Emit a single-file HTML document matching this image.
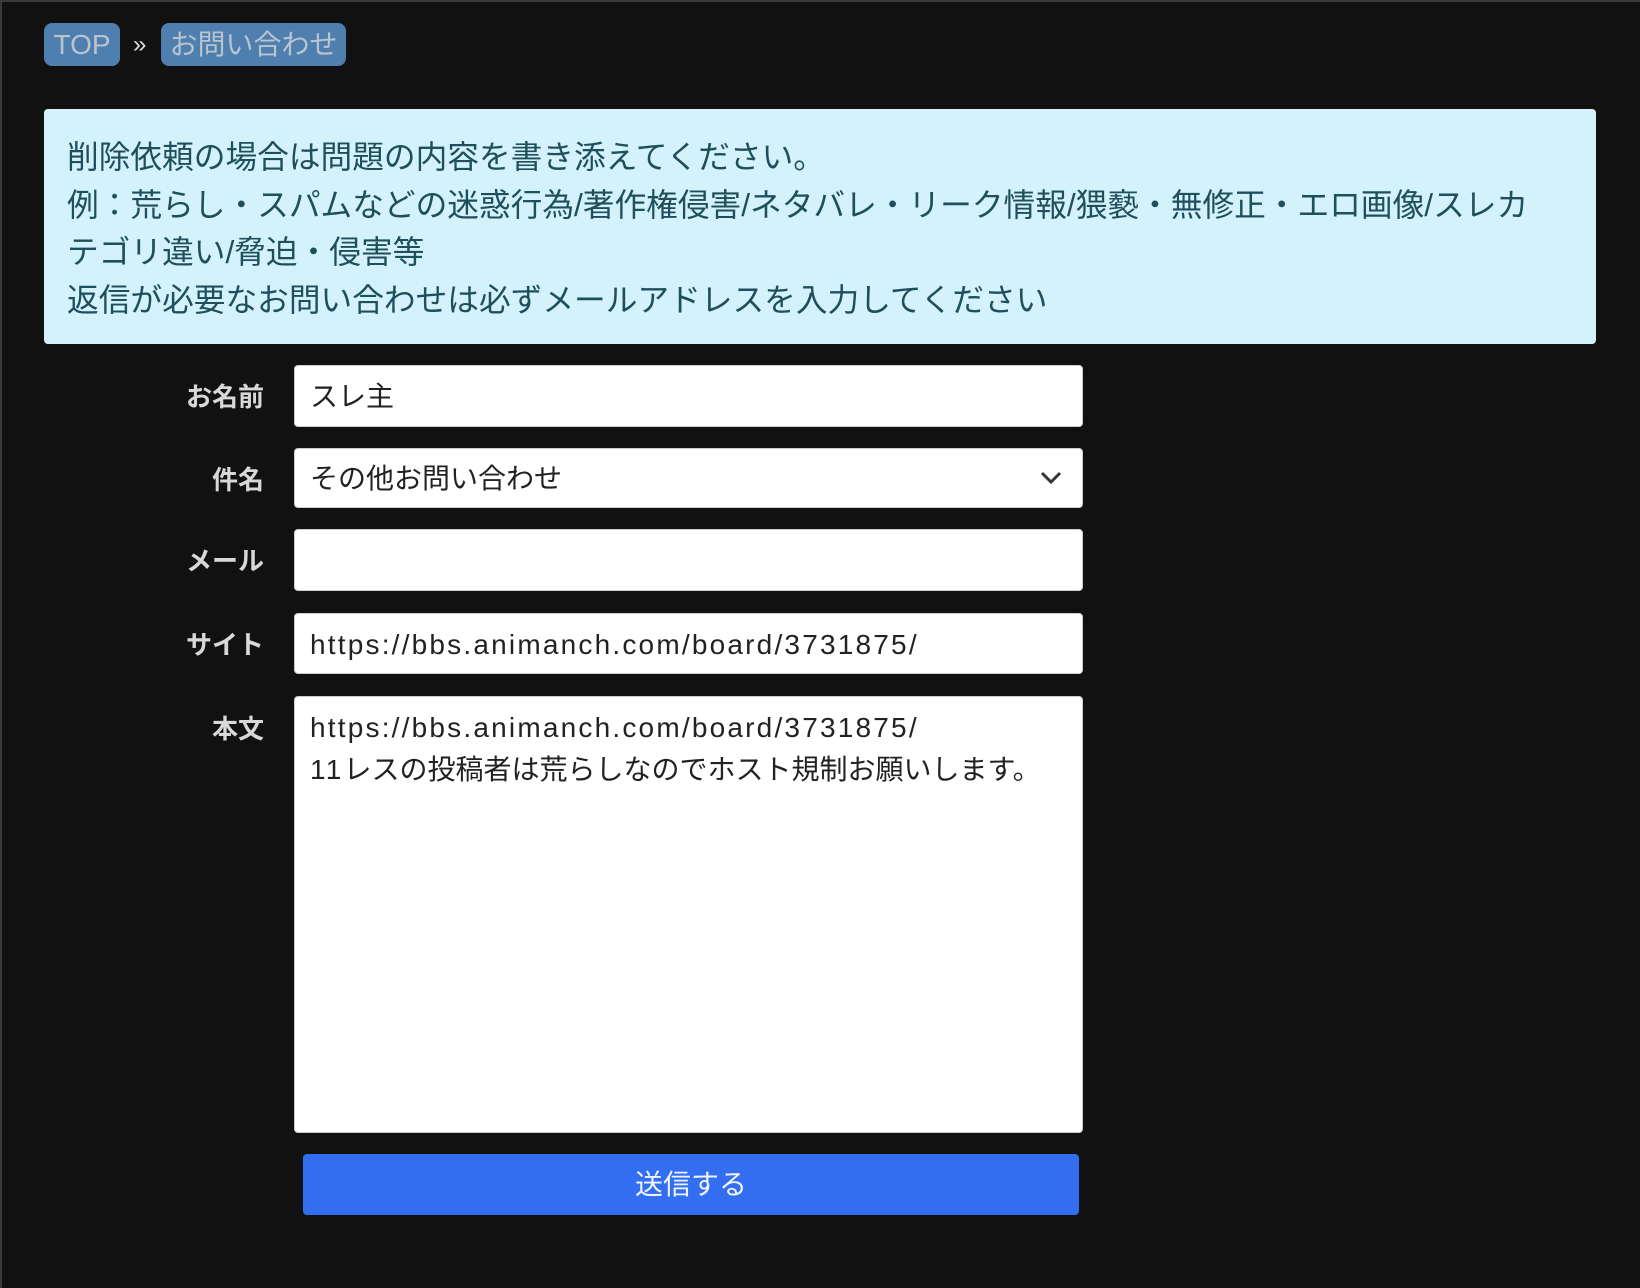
<!DOCTYPE html>
<html><head><meta charset="utf-8"><style>
html,body{margin:0;padding:0}
body{width:1640px;height:1288px;background:#111;position:relative;overflow:hidden;font-family:"Liberation Sans","Noto Sans CJK JP",sans-serif}
.frame{position:absolute;left:0;top:0;width:1638px;height:1286px;border-left:2px solid #3a3a3a;border-top:2px solid #3a3a3a}
.badge{position:absolute;top:23px;height:43px;background:#4e7fae;color:#b9c4cf;border-radius:8px;font-size:28px;line-height:43px;text-align:center}
.sep{position:absolute;left:133px;top:23px;line-height:43px;color:#ddd;font-size:24px}
.alert{position:absolute;left:44px;top:109px;width:1552px;height:235px;background:#d3f2fb;border-radius:4px;color:#1f4f5c;font-size:31.7px;line-height:47.5px;box-sizing:border-box;padding:25px 0 0 23px;white-space:nowrap}
.lbl{position:absolute;right:1376px;color:#d8d8d8;font-weight:bold;font-size:26px;text-align:right}
.inp{position:absolute;left:294px;width:789px;background:#fff;border:1px solid #ccc;border-radius:4px;box-sizing:border-box;font-size:28px;color:#222;padding-left:15px}
.l{letter-spacing:2.2px}
.btn{position:absolute;left:303px;top:1154px;width:776px;height:61px;background:#336ef0;border-radius:4px;color:#f0f4ff;font-size:28px;line-height:61px;text-align:center}
</style></head><body>
<div class="frame"></div>
<div class="badge" style="left:44px;width:76px">TOP</div>
<div class="sep">»</div>
<div class="badge" style="left:161px;width:185px">お問い合わせ</div>
<div class="alert">削除依頼の場合は問題の内容を書き添えてください。<br>例：荒らし・スパムなどの迷惑行為/著作権侵害/ネタバレ・リーク情報/猥褻・無修正・エロ画像/スレカ<br>テゴリ違い/脅迫・侵害等<br>返信が必要なお問い合わせは必ずメールアドレスを入力してください</div>

<div class="lbl" style="top:377px">お名前</div>
<div class="inp" style="top:365px;height:62px;line-height:62px">スレ主</div>
<div class="lbl" style="top:460px">件名</div>
<div class="inp" style="top:448px;height:60px;line-height:60px">その他お問い合わせ
<svg style="position:absolute;right:20px;top:22px" width="22" height="14" viewBox="0 0 22 14"><path d="M2 2 L11 11 L20 2" fill="none" stroke="#333" stroke-width="3"/></svg></div>
<div class="lbl" style="top:541px">メール</div>
<div class="inp" style="top:529px;height:62px"></div>
<div class="lbl" style="top:625px">サイト</div>
<div class="inp" style="top:613px;height:61px;line-height:61px"><span class="l">https://bbs.animanch.com/board/3731875/</span></div>
<div class="lbl" style="top:709px">本文</div>
<div class="inp" style="top:696px;height:437px;line-height:42px;padding-top:10px"><span class="l">https://bbs.animanch.com/board/3731875/</span><br><span class="l">11</span>レスの投稿者は荒らしなのでホスト規制お願いします。</div>
<div class="btn">送信する</div>
</body></html>
